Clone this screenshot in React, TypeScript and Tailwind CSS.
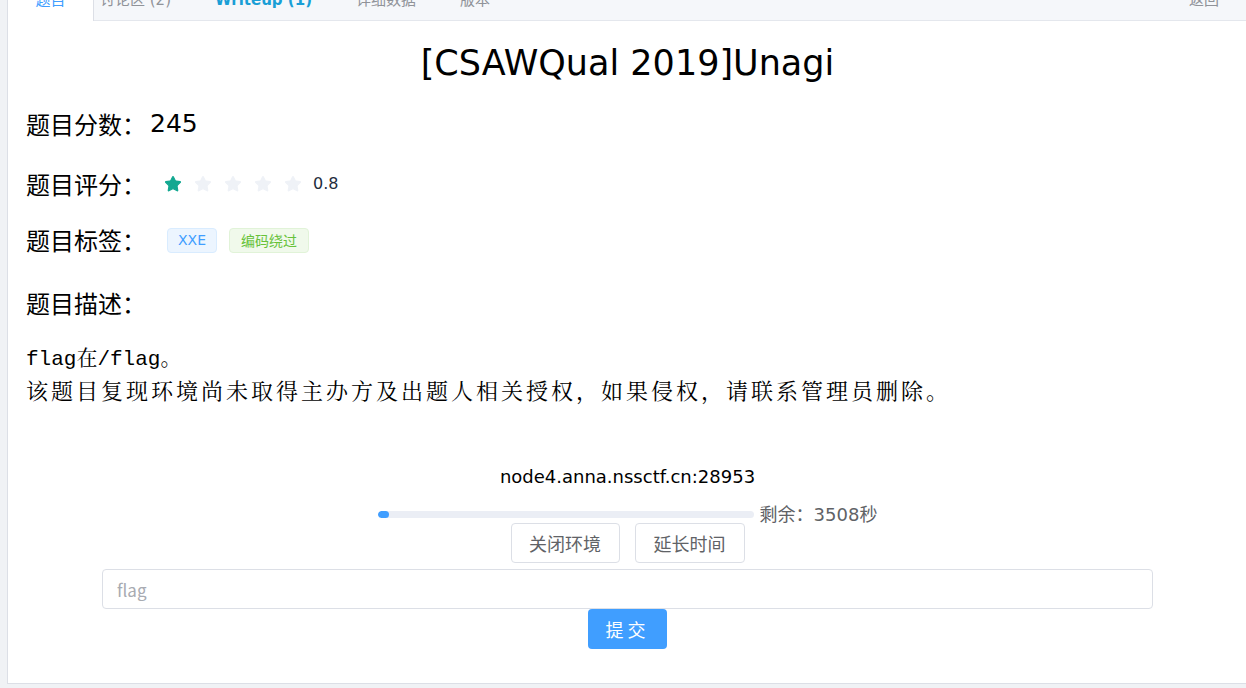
import { Star } from 'lucide-react'

const tabs = [
  { label: '讨论区 (2)', className: 'text-[#909399]' },
  { label: 'Writeup (1)', className: 'text-[#1a9fd6] font-bold' },
  { label: '详细数据', className: 'text-[#909399]' },
  { label: '版本', className: 'text-[#909399]' },
]

const latin = { fontFamily: '"DejaVu Sans", "Noto Sans CJK SC", sans-serif' }

export default function App() {
  return (
    <div
      className="min-h-[688px] h-[688px] overflow-hidden bg-[#f0f2f5] pl-[7px]"
      style={{ fontFamily: '"Noto Sans CJK SC", "DejaVu Sans", sans-serif' }}
    >
      <div className="-mt-[21px] w-[1241px] border border-[#dcdfe6] bg-white">
        {/* tab header, scrolled half out of view */}
        <div className="flex h-[41px] items-stretch border-b border-[#e4e7ed] bg-[#f5f7fa] text-[15px] leading-[40px]" style={latin}>
          <div className="-mb-px w-[86px] border-r border-[#dcdfe6] bg-white text-center text-[#409eff]">题目</div>
          <div className="flex flex-1 items-stretch gap-[44px] pl-[6px]">
            {tabs.map((t) => (
              <div key={t.label} className={t.className}>{t.label}</div>
            ))}
          </div>
          <div className="pr-[28px] text-[#909399]">返回</div>
        </div>

        <div className="px-[18px] pb-[34px]">
          <h1 className="mt-[18px] h-[48px] text-center text-[35px] leading-[48px] text-black" style={latin}>
            [CSAWQual 2019]Unagi
          </h1>

          <div className="mt-[19px] flex h-[36px] items-center text-[24px] text-black">
            <span>题目分数：</span>
            <span style={latin} className="ml-[4px] text-[25px]">245</span>
          </div>

          <div className="mt-[24px] flex h-[36px] items-center text-[24px] text-black">
            <span className="w-[138px]">题目评分：</span>
            <div className="flex items-center gap-[12px]">
              {[0, 1, 2, 3, 4].map((i) => (
                <Star
                  key={i}
                  size={18}
                  strokeWidth={1.5}
                  className={i === 0 ? 'fill-[#13a891] text-[#13a891]' : 'fill-[#eff2f7] text-[#eff2f7]'}
                />
              ))}
            </div>
            <span className="ml-[11px] text-[16px] text-[#1f2d3d]" style={latin}>0.8</span>
          </div>

          <div className="mt-[20px] flex h-[36px] items-center text-[24px] text-black">
            <span className="w-[141px]">题目标签：</span>
            <div className="flex items-center gap-[12px] text-[14px]">
              <span className="flex h-[25px] items-center rounded border border-[#d9ecff] bg-[#ecf5ff] px-[10px] text-[#409eff]" style={latin}>XXE</span>
              <span className="flex h-[25px] items-center rounded border border-[#e1f3d8] bg-[#f0f9eb] px-[11px] text-[#67c23a]">编码绕过</span>
            </div>
          </div>

          <div className="mt-[27px] flex h-[36px] items-center text-[24px] text-black">题目描述：</div>

          <div
            className="mt-[22px] text-[24px] leading-[30px] text-black"
            style={{ fontFamily: '"Noto Serif CJK SC", "Noto Sans Mono CJK SC", "Liberation Mono", "Noto Sans CJK SC", serif' }}
          >
            <div style={{ fontFamily: '"Liberation Mono", "Noto Serif CJK SC", "Noto Sans CJK SC", monospace' }} className="pt-[2px] text-[21px]">
              flag在/flag。
            </div>
            <div className="text-[22px] tracking-[3px]">
              该题目复现环境尚未取得主办方及出题人相关授权，如果侵权，请联系管理员删除。
            </div>
          </div>

          <div className="mt-[60px] text-center text-[18px] leading-[24px] text-black" style={latin}>
            node4.anna.nssctf.cn:28953
          </div>

          <div className="mt-[16px] flex h-[18px] items-center justify-center">
            <div className="h-[7px] w-[376px] overflow-hidden rounded-full bg-[#ebeef5]">
              <div className="h-full w-[11px] rounded-full bg-[#409eff]" />
            </div>
            <span className="ml-[6px] text-[18px] text-[#606266]">剩余：<span style={latin}>3508</span>秒</span>
          </div>

          <div className="flex justify-center gap-[15px]">
            <button className="h-[40px] w-[109px] rounded border border-[#dcdfe6] bg-white text-[18px] text-[#606266]">关闭环境</button>
            <button className="h-[40px] w-[110px] rounded border border-[#dcdfe6] bg-white text-[18px] text-[#606266]">延长时间</button>
          </div>

          <input
            placeholder="flag"
            className="mx-auto mt-[6px] block h-[40px] w-[1051px] rounded border border-[#dcdfe6] px-[14px] text-[17px] text-[#606266] outline-none placeholder:text-[#a8abb2]"
          />

          <div className="flex justify-center">
            <button className="h-[40px] w-[79px] rounded bg-[#409eff] text-[18px] tracking-[4px] text-white">提交</button>
          </div>
        </div>
      </div>
    </div>
  )
}
